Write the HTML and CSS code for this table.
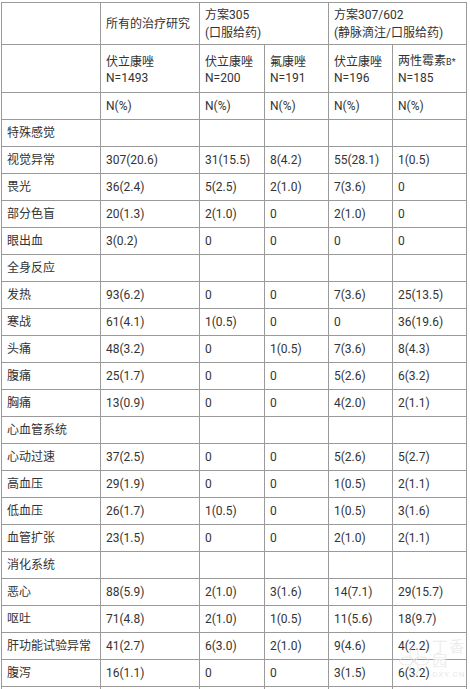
FILE: index.html
```html
<!DOCTYPE html>
<html lang="zh-CN">
<head>
<meta charset="utf-8">
<title>不良反应表</title>
<link rel="stylesheet" href="styles.css">
</head>
<body>
<table class="ae">
<colgroup>
<col class="c1"><col class="c2"><col class="c3"><col class="c4"><col class="c5"><col class="c6">
</colgroup>
<tr class="h1">
<td></td><td>所有的治疗研究</td><td colspan="2">方案305<br>(口服给药)</td><td colspan="2">方案307/602<br>(静脉滴注/口服给药)</td>
</tr>
<tr class="h2">
<td></td><td>伏立康唑<br>N=1493</td><td>伏立康唑<br>N=200</td><td>氟康唑<br>N=191</td><td>伏立康唑<br>N=196</td><td>两性霉素<span class="sm">B*</span><br>N=185</td>
</tr>
<tr><td></td><td>N(%)</td><td>N(%)</td><td>N(%)</td><td>N(%)</td><td>N(%)</td></tr>
<tr><td>特殊感觉</td><td></td><td></td><td></td><td></td><td></td></tr>
<tr><td>视觉异常</td><td>307(20.6)</td><td>31(15.5)</td><td>8(4.2)</td><td>55(28.1)</td><td>1(0.5)</td></tr>
<tr><td>畏光</td><td>36(2.4)</td><td>5(2.5)</td><td>2(1.0)</td><td>7(3.6)</td><td>0</td></tr>
<tr><td>部分色盲</td><td>20(1.3)</td><td>2(1.0)</td><td>0</td><td>2(1.0)</td><td>0</td></tr>
<tr><td>眼出血</td><td>3(0.2)</td><td>0</td><td>0</td><td>0</td><td>0</td></tr>
<tr><td>全身反应</td><td></td><td></td><td></td><td></td><td></td></tr>
<tr><td>发热</td><td>93(6.2)</td><td>0</td><td>0</td><td>7(3.6)</td><td>25(13.5)</td></tr>
<tr><td>寒战</td><td>61(4.1)</td><td>1(0.5)</td><td>0</td><td>0</td><td>36(19.6)</td></tr>
<tr><td>头痛</td><td>48(3.2)</td><td>0</td><td>1(0.5)</td><td>7(3.6)</td><td>8(4.3)</td></tr>
<tr><td>腹痛</td><td>25(1.7)</td><td>0</td><td>0</td><td>5(2.6)</td><td>6(3.2)</td></tr>
<tr><td>胸痛</td><td>13(0.9)</td><td>0</td><td>0</td><td>4(2.0)</td><td>2(1.1)</td></tr>
<tr><td>心血管系统</td><td></td><td></td><td></td><td></td><td></td></tr>
<tr><td>心动过速</td><td>37(2.5)</td><td>0</td><td>0</td><td>5(2.6)</td><td>5(2.7)</td></tr>
<tr><td>高血压</td><td>29(1.9)</td><td>0</td><td>0</td><td>1(0.5)</td><td>2(1.1)</td></tr>
<tr><td>低血压</td><td>26(1.7)</td><td>1(0.5)</td><td>0</td><td>1(0.5)</td><td>3(1.6)</td></tr>
<tr><td>血管扩张</td><td>23(1.5)</td><td>0</td><td>0</td><td>2(1.0)</td><td>2(1.1)</td></tr>
<tr><td>消化系统</td><td></td><td></td><td></td><td></td><td></td></tr>
<tr><td>恶心</td><td>88(5.9)</td><td>2(1.0)</td><td>3(1.6)</td><td>14(7.1)</td><td>29(15.7)</td></tr>
<tr><td>呕吐</td><td>71(4.8)</td><td>2(1.0)</td><td>1(0.5)</td><td>11(5.6)</td><td>18(9.7)</td></tr>
<tr><td>肝功能试验异常</td><td>41(2.7)</td><td>6(3.0)</td><td>2(1.0)</td><td>9(4.6)</td><td>4(2.2)</td></tr>
<tr><td>腹泻</td><td>16(1.1)</td><td>0</td><td>0</td><td>3(1.5)</td><td>6(3.2)</td></tr>
<tr><td>&nbsp;</td><td></td><td></td><td></td><td></td><td></td></tr>
</table>
<div class="mark" aria-hidden="true">
<svg width="40" height="40" viewBox="0 0 40 40"><g fill="none" stroke="#e6e6e6" stroke-width="1.2"><ellipse cx="20" cy="11" rx="5" ry="9"/><ellipse cx="20" cy="29" rx="5" ry="9"/><ellipse cx="11" cy="20" rx="9" ry="5"/><ellipse cx="29" cy="20" rx="9" ry="5"/></g></svg>
<div class="mtext"><span class="mcn">丁香园</span><span class="men">DXY.CN</span></div>
</div>
</body>
</html>
```
FILE: styles.css
```css
html, body {
  margin: 0;
  padding: 0;
  background: #ffffff;
}
body {
  padding: 2px 0 0 1px;
  font-family: Roboto, "Noto Sans CJK SC", sans-serif;
  font-size: 12px;
  color: #333333;
  position: relative;
  overflow: hidden;
  height: 689px;
  box-sizing: border-box;
}
.ae {
  border-collapse: collapse;
  table-layout: fixed;
  width: 465px;
}
.c1 { width: 99px; }
.c2 { width: 99px; }
.c3 { width: 65px; }
.c4 { width: 64px; }
.c5 { width: 64px; }
.c6 { width: 74px; }
.ae td {
  border: 1px solid #9a9a9a;
  padding: 0 5px;
  height: 26px;
  line-height: 18px;
  vertical-align: middle;
  text-align: left;
  white-space: nowrap;
  overflow: hidden;
}
.ae tr.h1 td { height: 41px; line-height: 18px; }
.ae tr.h2 td { height: 45px; line-height: 16px; padding-top: 2px; }
.sm { font-size: 9px; }
.mark {
  position: absolute;
  left: 398px;
  top: 640px;
  display: flex;
  align-items: center;
  gap: 2px;
  opacity: 0.9;
}
.mtext {
  display: flex;
  flex-direction: column;
  line-height: 14px;
}
.mcn { font-size: 15px; color: #ececec; letter-spacing: 2px; }
.men { font-size: 8px; color: #e8e8e8; letter-spacing: 1px; }
```
